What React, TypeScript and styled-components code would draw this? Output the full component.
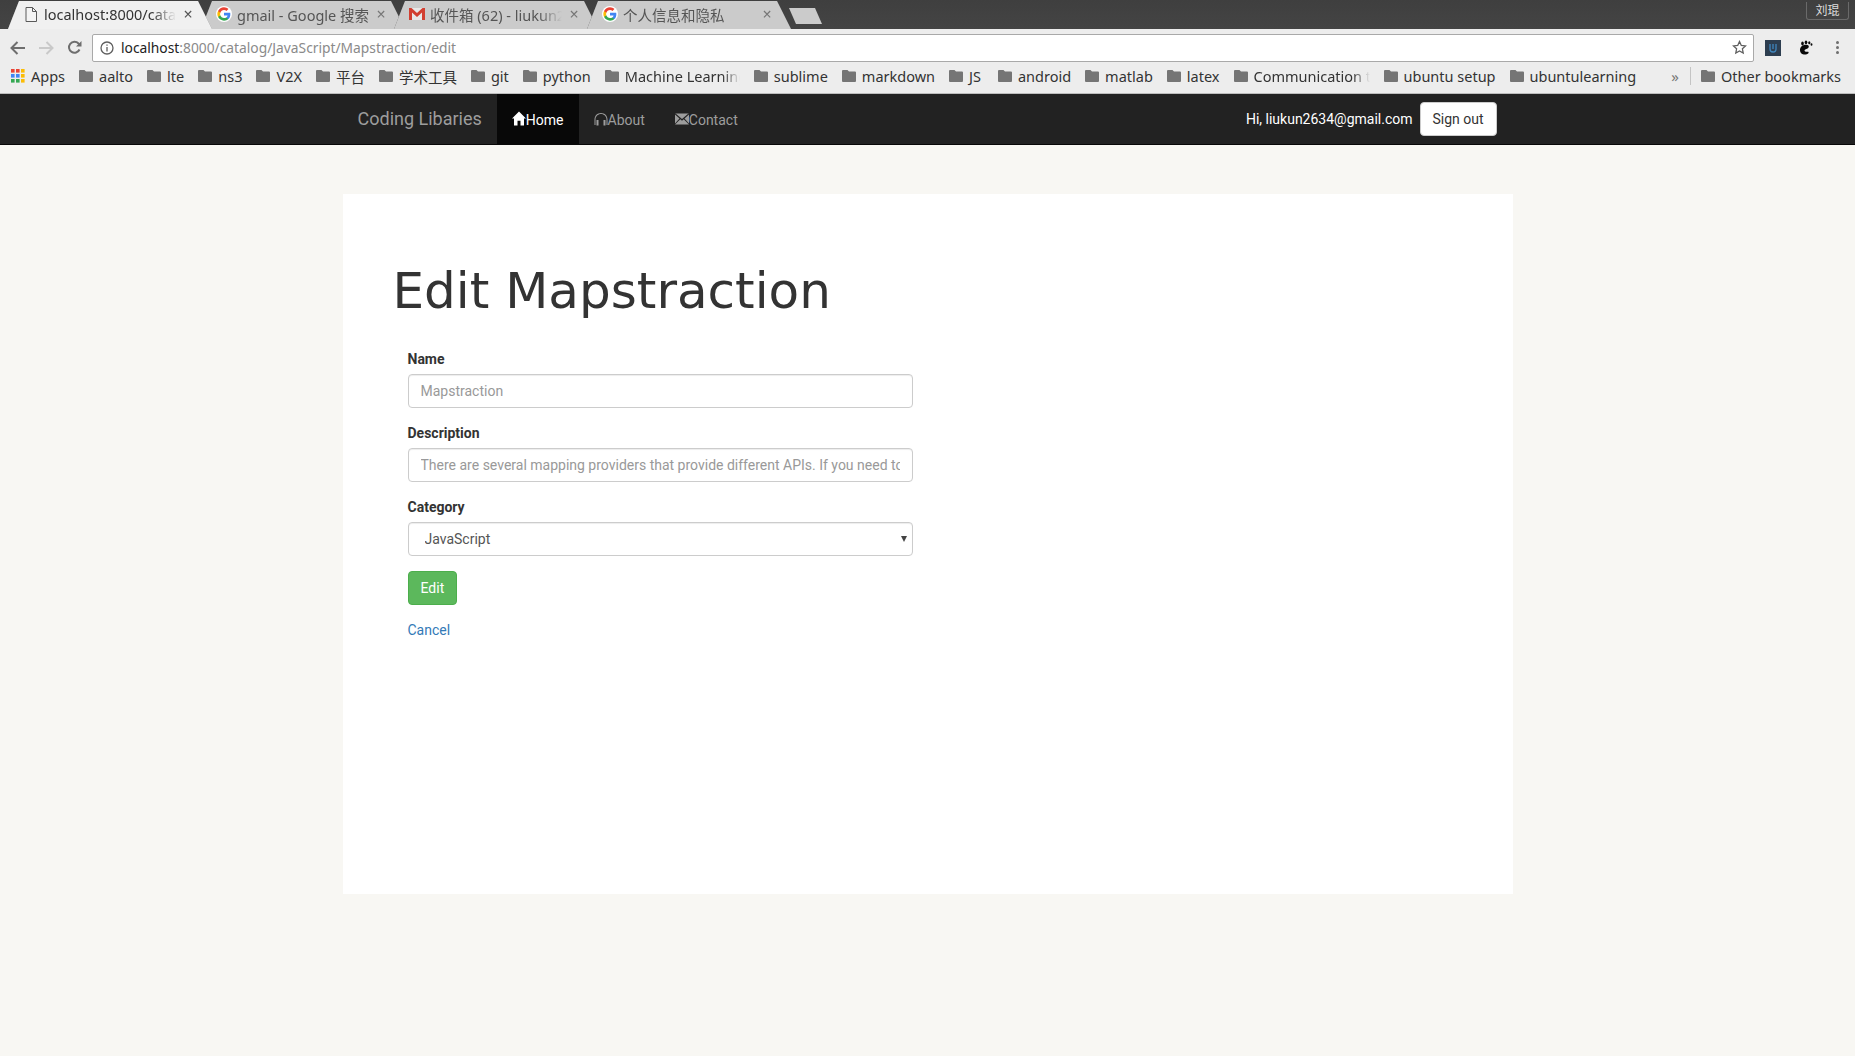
import styled, { createGlobalStyle } from 'styled-components';

const GlobalStyle = createGlobalStyle`
  * { box-sizing: border-box; }
  html, body { margin: 0; padding: 0; }
  body {
    background: #f8f7f3;
    font-family: Roboto, "Liberation Sans", sans-serif;
    font-size: 14px;
    color: #333;
    overflow: hidden;
  }
`;

const chromeFont = `"Noto Sans", "Noto Sans CJK SC", sans-serif`;

const bookmarks = [
  { label: 'aalto' },
  { label: 'lte' },
  { label: 'ns3' },
  { label: 'V2X' },
  { label: '平台' },
  { label: '学术工具' },
  { label: 'git' },
  { label: 'python' },
  { label: 'Machine Learning', width: 115 },
  { label: 'sublime' },
  { label: 'markdown' },
  { label: 'JS', extra: 3 },
  { label: 'android' },
  { label: 'matlab' },
  { label: 'latex' },
  { label: 'Communication tools', width: 116 },
  { label: 'ubuntu setup' },
  { label: 'ubuntulearning' },
];

function GoogleIcon() {
  return (
    <svg width="16" height="16" viewBox="0 0 48 48">
      <circle cx="24" cy="24" r="24" fill="#fff" />
      <path fill="#4285F4" d="M43 24.5c0-1.5-.1-2.900-.4-4.300H24v8.100h10.700c-.5 2.500-1.900 4.600-4 6v5h6.500C41 36 43 30.800 43 24.500z" />
      <path fill="#34A853" d="M24 44c5.400 0 9.900-1.800 13.200-4.700l-6.500-5c-1.800 1.200-4 1.900-6.700 1.900-5.200 0-9.600-3.500-11.100-8.200H6.200v5.200C9.500 39.600 16.200 44 24 44z" />
      <path fill="#FBBC05" d="M12.900 28c-.4-1.200-.6-2.500-.6-3.900s.2-2.700.6-3.900V15H6.200C4.800 17.700 4 20.800 4 24s.8 6.300 2.200 9z" />
      <path fill="#EA4335" d="M24 12c2.900 0 5.500 1 7.600 3l5.700-5.700C33.900 6.100 29.400 4 24 4 16.200 4 9.500 8.400 6.200 15l6.700 5.200C14.400 15.500 18.800 12 24 12z" />
    </svg>
  );
}

function GmailIcon() {
  return (
    <svg width="16" height="14" viewBox="0 0 16 14">
      <path fill="#e8e8e8" d="M1 1h14v12H1z" />
      <path fill="#d23f31" d="M0 1h2.500L8 6l5.500-5H16v12h-3V5.500L8 10 3 5.500V13H0z" />
    </svg>
  );
}

function PageIcon() {
  return (
    <svg width="12" height="15" viewBox="0 0 12 15" fill="#f4f4f4" stroke="#5a5a5a" strokeWidth="1">
      <path d="M1 .5h6.500l4 4v10h-10.500z" />
      <path d="M7.500.5v4h4" fill="none" />
    </svg>
  );
}

function FolderIcon() {
  return (
    <svg width="14" height="12" viewBox="0 0 14 12" fill="#757575">
      <path d="M1 0h4.500l1.500 1.500h6a1 1 0 0 1 1 1V11a1 1 0 0 1-1 1H1a1 1 0 0 1-1-1V1a1 1 0 0 1 1-1z" />
    </svg>
  );
}

function AppsIcon() {
  const colors = ['#ea4335', '#ea4335', '#fbbc05', '#4285f4', '#4285f4', '#fbbc05', '#34a853', '#34a853', '#fbbc05'];
  return (
    <svg width="14" height="14" viewBox="0 0 14 14">
      {colors.map((c, i) => (
        <rect key={i} x={(i % 3) * 5} y={Math.floor(i / 3) * 5} width="3.600" height="3.600" fill={c} />
      ))}
    </svg>
  );
}

function HomeIcon() {
  return (
    <svg width="14" height="15" viewBox="0 0 14 14" preserveAspectRatio="none" fill="currentColor">
      <path d="M7 .5L14 7h-2v6.500H8.500V9h-3v4.500H2V7H0z" />
    </svg>
  );
}

function HeadphonesIcon() {
  return (
    <svg width="14" height="14" viewBox="0 0 14 14" fill="currentColor">
      <path d="M7 1C3.300 1 .5 3.800.5 7.500V13h1V7.500C1.500 4.400 3.900 2 7 2s5.500 2.400 5.500 5.500V13h1V7.500C13.500 3.800 10.700 1 7 1z" />
      <rect x="2.500" y="8" width="2" height="5.500" />
      <rect x="9.500" y="8" width="2" height="5.500" />
    </svg>
  );
}

function EnvelopeIcon() {
  return (
    <svg width="14" height="12" viewBox="0 0 14 12" preserveAspectRatio="none" fill="currentColor">
      <path d="M0 0l7 6 7-6v.5H0zM0 1.500V10.500L4.500 5.500zM14 1.500V10.500L9.500 5.500zM0 11.500L5.300 6.300 7 7.700l1.700-1.400L14 11.500z" />
    </svg>
  );
}

export default function App() {
  return (
    <>
      <GlobalStyle />
      <TabStrip>
        <TabRow>
          <Tab $active>
            <TabShape $active>
              <TabIcon><PageIcon /></TabIcon>
              <TabTitle $active $fade>localhost:8000/cata</TabTitle>
              <TabClose $active>×</TabClose>
            </TabShape>
          </Tab>
          <Tab>
            <TabShape>
              <TabIcon><GoogleIcon /></TabIcon>
              <TabTitle>gmail - Google 搜索</TabTitle>
              <TabClose>×</TabClose>
            </TabShape>
          </Tab>
          <Tab>
            <TabShape>
              <TabIcon><GmailIcon /></TabIcon>
              <TabTitle $fade>收件箱 (62) - liukun2</TabTitle>
              <TabClose>×</TabClose>
            </TabShape>
          </Tab>
          <Tab>
            <TabShape>
              <TabIcon><GoogleIcon /></TabIcon>
              <TabTitle>个人信息和隐私</TabTitle>
              <TabClose>×</TabClose>
            </TabShape>
          </Tab>
        </TabRow>
        <NewTab />
        <UserBadge>刘琨</UserBadge>
      </TabStrip>

      <Toolbar>
        <NavButton>
          <svg width="16" height="14" viewBox="0 0 16 14" fill="none" stroke="#6e6e6e" strokeWidth="2">
            <path d="M15 7H2M7.500 1L1.500 7l6 6" />
          </svg>
        </NavButton>
        <NavButton>
          <svg width="16" height="14" viewBox="0 0 16 14" fill="none" stroke="#c9c9c9" strokeWidth="2">
            <path d="M1 7h13M8.500 1l6 6-6 6" />
          </svg>
        </NavButton>
        <NavButton>
          <svg width="15" height="15" viewBox="0 0 15 15" fill="none">
            <path d="M12.500 9.500A5.500 5.500 0 1 1 11.500 3.500L13 5" stroke="#6e6e6e" strokeWidth="2" />
            <path d="M14.500 1v5.500H9z" fill="#6e6e6e" />
          </svg>
        </NavButton>
        <AddressBar>
          <svg width="14" height="14" viewBox="0 0 14 14" fill="none" stroke="#5f5f5f" strokeWidth="1.300">
            <circle cx="7" cy="7" r="6" />
            <path d="M7 6v4.500M7 3.500v1.300" />
          </svg>
          <UrlText>
            <UrlHost>localhost</UrlHost>:8000/catalog/JavaScript/Mapstraction/edit
          </UrlText>
          <svg width="15" height="15" viewBox="0 0 15 15" fill="none" stroke="#5f5f5f" strokeWidth="1.300">
            <path d="M7.500 1.500l1.800 3.900 4.200.5-3.100 2.900.8 4.200-3.700-2.100-3.700 2.100.8-4.200L1.500 5.900l4.200-.5z" />
          </svg>
        </AddressBar>
        <ExtensionBadge>
          <svg width="10" height="10" viewBox="0 0 10 10" fill="none" stroke="#3f86bd" strokeWidth="1.300">
            <path d="M2 1v5a3 3 0 0 0 6 0V1M5 1v5" />
          </svg>
        </ExtensionBadge>
        <FootIcon>
          <svg width="14" height="15" viewBox="0 0 14 15" fill="#0a0a0a">
            <path d="M8.500 5C4.500 4 1 6.500 1 10s3 5 6 4.500c2 -.3 3-1.500 2.500-2.500-.6-1-3.200.6-3.900-.9C5 9.500 7 9 8.500 8.500 10 8 10.500 5.500 8.500 5z" />
            <ellipse cx="3.500" cy="3.500" rx="1.300" ry="2" />
            <ellipse cx="7" cy="2.300" rx="1.300" ry="1.900" />
            <ellipse cx="10.300" cy="2.800" rx="1.100" ry="1.500" />
            <ellipse cx="12.500" cy="4.500" rx=".9" ry="1.200" />
          </svg>
        </FootIcon>
        <MenuDots>
          <i />
          <i />
          <i />
        </MenuDots>
      </Toolbar>

      <BookmarkBar>
        <Bookmark>
          <AppsIcon />
          <span>Apps</span>
        </Bookmark>
        {bookmarks.map((b) => (
          <Bookmark key={b.label} $extra={b.extra}>
            <FolderIcon />
            <BookmarkLabel $width={b.width}>{b.label}</BookmarkLabel>
          </Bookmark>
        ))}
        <BookmarkEnd>
          <Overflow>»</Overflow>
          <Separator />
          <Bookmark>
            <FolderIcon />
            <span>Other bookmarks</span>
          </Bookmark>
        </BookmarkEnd>
      </BookmarkBar>

      <Navbar>
        <NavContainer>
          <Brand>Coding Libaries</Brand>
          <NavItem $active>
            <HomeIcon />
            Home
          </NavItem>
          <NavItem>
            <HeadphonesIcon />
            About
          </NavItem>
          <NavItem>
            <EnvelopeIcon />
            Contact
          </NavItem>
          <UserArea>
            <Greeting>Hi, liukun2634@gmail.com</Greeting>
            <SignOut>Sign out</SignOut>
          </UserArea>
        </NavContainer>
      </Navbar>

      <Panel>
        <Heading>Edit Mapstraction</Heading>
        <Form>
          <FormGroup>
            <Label>Name</Label>
            <TextInput placeholder="Mapstraction" />
          </FormGroup>
          <FormGroup>
            <Label>Description</Label>
            <TextInput placeholder="There are several mapping providers that provide different APIs. If you need to switch from one provider to another" />
          </FormGroup>
          <FormGroup>
            <Label>Category</Label>
            <SelectWrap>
              <SelectInput defaultValue="JavaScript">
                <option>JavaScript</option>
                <option>Python</option>
              </SelectInput>
              <SelectCaret />
            </SelectWrap>
          </FormGroup>
          <SubmitButton type="button">Edit</SubmitButton>
          <CancelLink href="#">Cancel</CancelLink>
        </Form>
      </Panel>
    </>
  );
}

const TabStrip = styled.div`
  display: flex;
  height: 29px;
  padding: 1px 6px 0 8px;
  background: linear-gradient(#3f3f3f, #444);
  font-family: ${chromeFont};
`;

const TabRow = styled.div`
  display: grid;
  grid-template-columns: repeat(4, 193px);
`;

const Tab = styled.div<{ $active?: boolean }>`
  position: relative;
  z-index: ${(p) => (p.$active ? 2 : 1)};
  width: 204px;
  filter: drop-shadow(0 0 0.6px ${(p) => (p.$active ? '#777' : '#555')});
`;

const TabShape = styled.div<{ $active?: boolean }>`
  display: flex;
  align-items: center;
  width: 204px;
  height: 100%;
  padding: 0 0 2px 15px;
  background: ${(p) => (p.$active ? '#f0f0f0' : '#cbcbcb')};
  clip-path: polygon(0 100%, 11px 0, 190px 0, 204px 100%);
`;

const TabIcon = styled.span`
  display: flex;
  flex: 0 0 16px;
  justify-content: center;
  align-items: center;
  margin-right: 5px;
`;

const TabTitle = styled.span<{ $active?: boolean; $fade?: boolean }>`
  flex: 0 0 132px;
  overflow: hidden;
  white-space: nowrap;
  font-size: 14.500px;
  color: ${(p) => (p.$active ? '#333' : '#555')};
  ${(p) =>
    p.$fade
      ? `
    -webkit-mask-image: linear-gradient(90deg, #000 82%, transparent 100%);
    mask-image: linear-gradient(90deg, #000 82%, transparent 100%);
  `
      : ''}
`;

const TabClose = styled.span<{ $active?: boolean }>`
  flex: 0 0 12px;
  margin-left: 6px;
  font-size: 16px;
  line-height: 1;
  text-align: center;
  color: ${(p) => (p.$active ? '#555' : '#777')};
`;

const NewTab = styled.div`
  flex: 0 0 33px;
  height: 16px;
  margin: 7px 0 0 9px;
  background: #cbcbcb;
  clip-path: polygon(0 0, 26px 0, 33px 100%, 7px 100%);
`;

const UserBadge = styled.div`
  margin-left: auto;
  width: 43px;
  height: 18px;
  border: 1px solid #6a6a6a;
  border-top: none;
  border-radius: 0 0 3px 3px;
  margin-top: 1px;
  font-size: 12px;
  line-height: 16px;
  text-align: center;
  color: #ddd;
  font-family: "Noto Sans CJK SC", sans-serif;
`;

const Toolbar = styled.div`
  display: flex;
  align-items: center;
  height: 33px;
  padding: 4px 16px 0 4px;
  background: #ededed;
`;

const NavButton = styled.span`
  display: flex;
  justify-content: center;
  align-items: center;
  flex: 0 0 28px;
`;

const AddressBar = styled.div`
  display: flex;
  flex: 1;
  align-items: center;
  gap: 7px;
  height: 28px;
  margin-left: 4px;
  padding: 0 6px 0 7px;
  background: #fff;
  border: 1px solid #a9a9a9;
  border-radius: 2px;
`;

const UrlText = styled.div`
  flex: 1;
  padding-bottom: 1px;
  font-family: ${chromeFont};
  font-size: 13.800px;
  color: #8a8a8a;
`;

const UrlHost = styled.span`
  color: #222;
`;

const ExtensionBadge = styled.span`
  display: flex;
  justify-content: center;
  align-items: center;
  width: 16px;
  height: 16px;
  margin-left: 11px;
  background: #2d3e50;
`;

const FootIcon = styled.span`
  display: flex;
  margin-left: 18px;
`;

const MenuDots = styled.span`
  display: flex;
  flex-direction: column;
  gap: 2px;
  margin-left: 23px;
  i {
    width: 3px;
    height: 3px;
    border-radius: 50%;
    background: #6e6e6e;
  }
`;

const BookmarkBar = styled.div`
  display: flex;
  align-items: center;
  height: 32px;
  padding: 0 14px 3px 11px;
  background: #ededed;
  border-bottom: 1px solid #bdbdbd;
  font-family: ${chromeFont};
  font-size: 14.500px;
  color: #333;
`;

const Bookmark = styled.div<{ $extra?: number }>`
  display: flex;
  align-items: center;
  gap: 6px;
  margin-right: ${(p) => 14 + (p.$extra ?? 0)}px;
  white-space: nowrap;
  &:last-child {
    margin-right: 0;
  }
`;

const BookmarkLabel = styled.span<{ $width?: number }>`
  ${(p) =>
    p.$width
      ? `
    width: ${p.$width}px;
    overflow: hidden;
    -webkit-mask-image: linear-gradient(90deg, #000 85%, transparent 100%);
    mask-image: linear-gradient(90deg, #000 85%, transparent 100%);
  `
      : ''}
`;

const BookmarkEnd = styled.div`
  display: flex;
  align-items: center;
  margin-left: auto;
`;

const Overflow = styled.span`
  color: #777;
  font-size: 15px;
`;

const Separator = styled.span`
  width: 1px;
  height: 18px;
  margin: 0 10px 0 11px;
  background: #c4c4c4;
`;

const Navbar = styled.nav`
  height: 51px;
  background: #222;
  border-bottom: 1px solid #080808;
`;

const NavContainer = styled.div`
  display: flex;
  align-items: stretch;
  width: 1170px;
  height: 50px;
  margin: 0 auto;
  padding: 0 15px;
`;

const Brand = styled.a`
  padding-right: 15px;
  font-size: 18px;
  line-height: 50px;
  color: #9d9d9d;
`;

const NavItem = styled.a<{ $active?: boolean }>`
  display: flex;
  align-items: center;
  padding: 2px 15px 0;
  color: ${(p) => (p.$active ? '#fff' : '#9d9d9d')};
  background: ${(p) => (p.$active ? '#080808' : 'transparent')};
  svg {
    flex: none;
    margin-top: -3px;
  }
`;

const UserArea = styled.div`
  display: flex;
  align-items: center;
  gap: 7px;
  margin-left: auto;
  padding-right: 1px;
`;

const Greeting = styled.span`
  color: #fff;
  margin-top: -1px;
`;

const SignOut = styled.button`
  width: 77px;
  height: 34px;
  background: #fff;
  border: 1px solid #ccc;
  border-radius: 4px;
  font: inherit;
  color: #333;
`;

const Panel = styled.main`
  width: 1170px;
  height: 700px;
  margin: 49px auto 0;
  padding: 0 50px;
  background: #fff;
`;

const Heading = styled.h1`
  margin: 0;
  padding-top: 70px;
  font-family: "DejaVu Sans", sans-serif;
  font-size: 50px;
  font-weight: 400;
  line-height: 55px;
  color: #333;
`;

const Form = styled.form`
  display: flex;
  flex-direction: column;
  width: 535px;
  margin-top: 30px;
  padding: 0 15px;
`;

const FormGroup = styled.div`
  display: flex;
  flex-direction: column;
  margin-bottom: 15px;
`;

const Label = styled.label`
  margin-bottom: 5px;
  font-weight: 700;
  line-height: 20px;
`;

const TextInput = styled.input`
  width: 100%;
  height: 34px;
  padding: 6px 12px;
  border: 1px solid #ccc;
  border-radius: 4px;
  box-shadow: inset 0 1px 1px rgba(0, 0, 0, 0.075);
  font: inherit;
  color: #555;
  &::placeholder {
    color: #999;
    opacity: 1;
  }
`;

const SelectWrap = styled.div`
  position: relative;
`;

const SelectInput = styled.select`
  display: block;
  width: 100%;
  height: 34px;
  padding: 6px 12px 6px 16px;
  appearance: none;
  background: #fff;
  border: 1px solid #ccc;
  border-radius: 4px;
  box-shadow: inset 0 1px 1px rgba(0, 0, 0, 0.075);
  font: inherit;
  color: #555;
`;

const SelectCaret = styled.span`
  position: absolute;
  top: 14px;
  right: 6px;
  border-left: 3px solid transparent;
  border-right: 3px solid transparent;
  border-top: 6px solid #444;
  pointer-events: none;
`;

const SubmitButton = styled.button`
  align-self: flex-start;
  height: 34px;
  padding: 6px 12px;
  background: #5cb85c;
  border: 1px solid #4cae4c;
  border-radius: 4px;
  font: inherit;
  color: #fff;
`;

const CancelLink = styled.a`
  align-self: flex-start;
  margin-top: 15px;
  line-height: 20px;
  color: #337ab7;
  text-decoration: none;
`;
